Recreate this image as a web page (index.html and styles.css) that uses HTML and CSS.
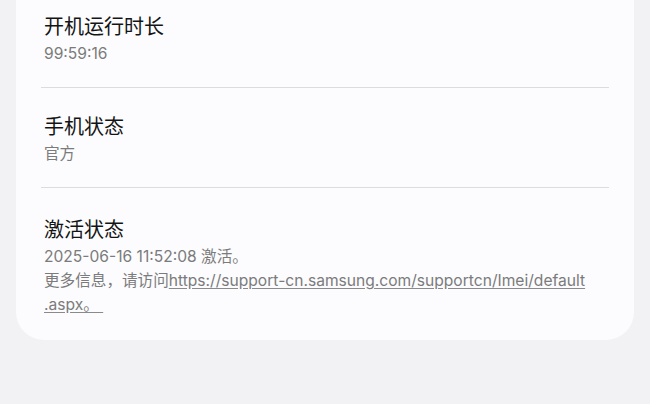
FILE: index.html
```html
<!DOCTYPE html>
<html lang="zh-CN">
<head>
<meta charset="utf-8">
<link rel="stylesheet" href="styles.css">
</head>
<body>
<div class="page">
  <div class="card">
    <div class="row row-first">
      <div class="title">开机运行时长</div>
      <div class="sub">99:59:16</div>
    </div>
    <div class="divider"></div>
    <div class="row">
      <div class="title">手机状态</div>
      <div class="sub">官方</div>
    </div>
    <div class="divider"></div>
    <div class="row row-last">
      <div class="title">激活状态</div>
      <div class="sub">2025-06-16 11:52:08 激活。</div>
      <div class="sub sub-more">更多信息，请访问<a class="link" href="#">https://support-cn.samsung.com/supportcn/Imei/default<br>.aspx。&nbsp;</a></div>
    </div>
  </div>
</div>
</body>
</html>
```
FILE: styles.css
```css
html, body {
  margin: 0;
  padding: 0;
  background: #f2f2f4;
}
body {
  font-family: Inter, "Noto Sans CJK SC", sans-serif;
  width: 650px;
  height: 404px;
  overflow: hidden;
}
.page {
  padding: 0 16px;
}
.card {
  background: #fcfcfe;
  border-radius: 0 0 28px 28px;
  padding: 0 25px;
}
.row {
  padding: 26px 3px 21px 3px;
}
.row-first {
  padding-top: 14px;
}
.row-last {
  padding-top: 29px;
  padding-bottom: 23px;
}
.title {
  font-size: 20px;
  line-height: 26px;
  color: #141414;
}
.sub {
  font-size: 15.6px;
  line-height: 24px;
  color: #7b7b7b;
  margin-top: 2px;
}
.sub-more {
  margin-top: 0;
}
.link {
  color: #7b7b7b;
  text-decoration: underline;
  text-decoration-color: #8a8a8a;
  text-underline-offset: 2px;
}
.divider {
  height: 1px;
  background: #dcdcde;
}
```
